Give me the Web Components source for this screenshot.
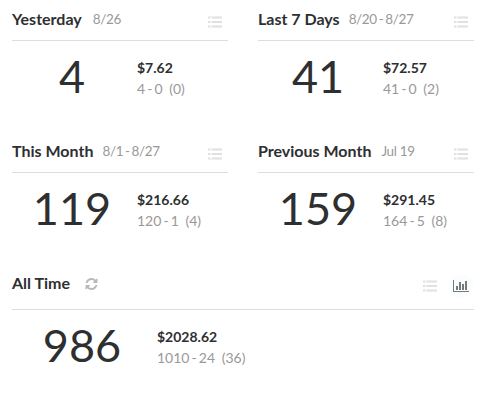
<!DOCTYPE html>
<html lang="en">
<head>
    <meta charset="UTF-8">
    <meta name="viewport" content="width=device-width, initial-scale=1.0">
    <title>Sales Summary</title>
    <style>
        body {
            margin: 0;
            background: #fff;
            color: #2e2f30;
            font-family: Lato, "Liberation Sans", sans-serif;
        }

        .range {
            word-spacing: -1.2px;
        }
    </style>
</head>
<body>
    <sales-summary>
        <stat-panel heading="Yesterday" count="4" amount="$7.62" record="4 - 0" voids="(0)" style="--note-gap: 11px">
            <span slot="note">8/26</span>
            <stat-icon slot="actions" name="list"></stat-icon>
        </stat-panel>
        <stat-panel heading="Last 7 Days" count="41" amount="$72.57" record="41 - 0" voids="(2)">
            <span slot="note" class="range">8/20 - 8/27</span>
            <stat-icon slot="actions" name="list"></stat-icon>
        </stat-panel>
        <stat-panel heading="This Month" count="119" amount="$216.66" record="120 - 1" voids="(4)">
            <span slot="note" class="range">8/1 - 8/27</span>
            <stat-icon slot="actions" name="list"></stat-icon>
        </stat-panel>
        <stat-panel heading="Previous Month" count="159" amount="$291.45" record="164 - 5" voids="(8)" style="--note-gap: 10px">
            <span slot="note">Jul 19</span>
            <stat-icon slot="actions" name="list"></stat-icon>
        </stat-panel>
        <stat-panel wide heading="All Time" count="986" amount="$2028.62" record="1010 - 24" voids="(36)" style="--note-gap: 15px">
            <stat-icon slot="note" name="refresh"></stat-icon>
            <stat-icon slot="actions" name="list"></stat-icon>
            <stat-icon slot="actions" name="chart"></stat-icon>
        </stat-panel>
    </sales-summary>
    <script>
        const icons = {
            list: {
                width: 14,
                box: '0 0 14 12',
                shape: '<path d="M0 .5h2.5v2H0zM3.5 .5H14v2H3.5zM0 5h2.5v2H0zM3.5 5H14v2H3.5zM0 9.5h2.5v2H0zM3.5 9.5H14v2H3.5z"/>'
            },
            refresh: {
                width: 13,
                box: '128 128 1536 1536',
                shape: '<path d="M1639 1056q0 5-1 7-64 268-268 434.5T892 1664q-146 0-282.5-55T366 1452l-129 129q-19 19-45 19t-45-19-19-45v-448q0-26 19-45t45-19h448q26 0 45 19t19 45-19 45l-137 137q71 66 161 102t187 36q134 0 250-65t186-179q11-17 53-117 8-23 30-23h192q13 0 22.5 9.5t9.5 22.5zm25-800v448q0 26-19 45t-45 19h-448q-26 0-45-19t-19-45 19-45l138-138Q1097 384 896 384q-134 0-250 65T460 628q-11 17-53 117-8 23-30 23H178q-13 0-22.5-9.5T146 736v-7q65-268 270-434.5T896 128q146 0 284 55.5T1425 340l130-129q19-19 45-19t45 19 19 45z"/>'
            },
            chart: {
                width: 16,
                box: '0 128 2048 1536',
                shape: '<path d="M640 896v512H384V896h256zm384-512v1024H768V384h256zm1024 1152v128H0V128h128v1408h1920zm-640-896v768h-256V640h256zm384-384v1152h-256V256h256z"/>'
            }
        };

        class StatIcon extends HTMLElement {
            constructor() {
                super();
                this.attachShadow({mode: 'open'});
            }

            connectedCallback() {
                const icon = icons[this.getAttribute('name')];
                const style = `<style>
                    :host { display: block; color: #dfe0e0; }
                    :host([name="refresh"]) { color: #b8b9b9; }
                    :host([name="chart"]) {
                        margin: -6px -4px;
                        padding: 6px 4px;
                        border-radius: 50%;
                        background: #fafcfd;
                        color: #74797c;
                    }
                    svg { display: block; fill: currentColor; }
                </style>`;
                this.shadowRoot.innerHTML = `${style}<svg width="${icon.width}" height="12" viewBox="${icon.box}">${icon.shape}</svg>`;
            }
        }

        class StatPanel extends HTMLElement {
            constructor() {
                super();
                this.attachShadow({mode: 'open'});
            }

            connectedCallback() {
                const style = `<style>
                    :host { display: block; height: 132px; --count-width: 120px; }
                    :host([wide]) { grid-column: 1 / -1; --count-width: 140px; }
                    header {
                        display: flex;
                        align-items: center;
                        box-sizing: border-box;
                        height: 41px;
                        padding-bottom: 2px;
                        border-bottom: 1px solid #dcdddd;
                    }
                    :host([wide]) header { height: 46px; padding-bottom: 7px; }
                    h2 { margin: 0 var(--note-gap, 9px) 0 0; font-size: 16px; line-height: 38px; font-weight: 700; }
                    .note { font-size: 13.5px; letter-spacing: -.35px; line-height: 38px; color: #999; }
                    :host([wide]) .note { padding-top: 1px; line-height: 0; }
                    .actions { display: flex; gap: 16px; margin-left: auto; padding: 5px 6px 0 0; }
                    :host([wide]) .actions { padding-right: 5px; }
                    .figures { display: flex; }
                    .count {
                        width: var(--count-width);
                        font-size: 45px;
                        line-height: 54px;
                        padding-top: 8px;
                        text-align: center;
                    }
                    .money { padding: 16px 0 0 5px; font-size: 14px; line-height: 21px; }
                    .amount { font-weight: 700; }
                    .detail { color: #999; white-space: nowrap; word-spacing: -1.5px; }
                    .voids { margin-left: 4.5px; }
                </style>`;
                const content = `
                    <header>
                        <h2>${this.getAttribute('heading')}</h2>
                        <div class="note"><slot name="note"></slot></div>
                        <div class="actions"><slot name="actions"></slot></div>
                    </header>
                    <div class="figures">
                        <div class="count">${this.getAttribute('count')}</div>
                        <div class="money">
                            <div class="amount">${this.getAttribute('amount')}</div>
                            <div class="detail">
                                <span>${this.getAttribute('record')}</span>
                                <span class="voids">${this.getAttribute('voids')}</span>
                            </div>
                        </div>
                    </div>`;
                this.shadowRoot.innerHTML = style + content;
            }
        }

        class SalesSummary extends HTMLElement {
            constructor() {
                super();
                this.attachShadow({mode: 'open'}).innerHTML = `
                    <style>
                        :host {
                            display: grid;
                            grid-template-columns: 216px 216px;
                            column-gap: 30px;
                            padding-left: 12px;
                        }
                    </style>
                    <slot></slot>`;
            }
        }

        customElements.define('stat-icon', StatIcon);
        customElements.define('stat-panel', StatPanel);
        customElements.define('sales-summary', SalesSummary);
    </script>
</body>
</html>
